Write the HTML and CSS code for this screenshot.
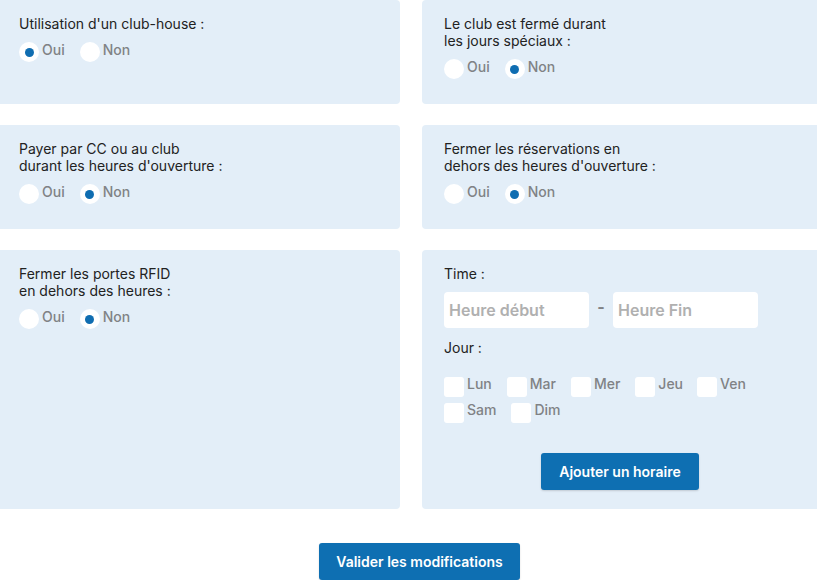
FILE: index.html
```html
<!DOCTYPE html>
<html lang="fr">
<head>
<meta charset="utf-8">
<link rel="stylesheet" href="styles.css">
</head>
<body>
<div class="page">
  <div class="grid">
    <div class="card">
      <div class="title">Utilisation d'un club-house :</div>
      <div class="radios">
        <label class="radio"><span class="dot checked"></span><span class="opt">Oui</span></label>
        <label class="radio"><span class="dot"></span><span class="opt">Non</span></label>
      </div>
    </div>
    <div class="card">
      <div class="title">Le club est fermé durant<br>les jours spéciaux :</div>
      <div class="radios">
        <label class="radio"><span class="dot"></span><span class="opt">Oui</span></label>
        <label class="radio"><span class="dot checked"></span><span class="opt">Non</span></label>
      </div>
    </div>
    <div class="card">
      <div class="title">Payer par CC ou au club<br>durant les heures d'ouverture :</div>
      <div class="radios">
        <label class="radio"><span class="dot"></span><span class="opt">Oui</span></label>
        <label class="radio"><span class="dot checked"></span><span class="opt">Non</span></label>
      </div>
    </div>
    <div class="card">
      <div class="title">Fermer les réservations en<br>dehors des heures d'ouverture :</div>
      <div class="radios">
        <label class="radio"><span class="dot"></span><span class="opt">Oui</span></label>
        <label class="radio"><span class="dot checked"></span><span class="opt">Non</span></label>
      </div>
    </div>
    <div class="card tall">
      <div class="title">Fermer les portes RFID<br>en dehors des heures :</div>
      <div class="radios">
        <label class="radio"><span class="dot"></span><span class="opt">Oui</span></label>
        <label class="radio"><span class="dot checked"></span><span class="opt">Non</span></label>
      </div>
    </div>
    <div class="card tall">
      <div class="title">Time :</div>
      <div class="times">
        <div class="input">Heure début</div>
        <span class="dash">-</span>
        <div class="input">Heure Fin</div>
      </div>
      <div class="title jour">Jour :</div>
      <div class="days">
        <label class="day"><span class="box"></span><span class="opt">Lun</span></label>
        <label class="day"><span class="box"></span><span class="opt">Mar</span></label>
        <label class="day"><span class="box"></span><span class="opt">Mer</span></label>
        <label class="day"><span class="box"></span><span class="opt">Jeu</span></label>
        <label class="day"><span class="box"></span><span class="opt">Ven</span></label>
        <label class="day"><span class="box"></span><span class="opt">Sam</span></label>
        <label class="day"><span class="box"></span><span class="opt">Dim</span></label>
      </div>
      <div class="btn-row">
        <button class="btn">Ajouter un horaire</button>
      </div>
    </div>
  </div>
  <div class="footer">
    <button class="btn">Valider les modifications</button>
  </div>
</div>
</body>
</html>
```

FILE: styles.css
```css
html, body {
  margin: 0;
  padding: 0;
  background: #ffffff;
  overflow: hidden;
}
body {
  font-family: Inter, "Liberation Sans", sans-serif;
  font-size: 14px;
  color: #222222;
}
.page {
  margin-left: -3px;
  width: 828px;
}
.grid {
  display: grid;
  grid-template-columns: 403px 403px;
  column-gap: 22px;
  row-gap: 21px;
}
.card {
  background: #e3eef8;
  border-radius: 4px;
  height: 104px;
  box-sizing: border-box;
  padding: 15px 22px 0 22px;
}
.card.tall {
  height: 259px;
}
.title {
  line-height: 17px;
  color: #222222;
}
.radios {
  display: flex;
  gap: 15px;
  margin-top: 10px;
}
.radio {
  display: flex;
  align-items: center;
  gap: 3px;
  height: 20px;
}
.dot {
  width: 20px;
  height: 20px;
  border-radius: 50%;
  background: #ffffff;
  display: flex;
  align-items: center;
  justify-content: center;
}
.dot.checked::after {
  content: "";
  width: 9px;
  height: 9px;
  border-radius: 50%;
  background: #0f6db1;
}
.opt {
  color: #808285;
  font-weight: 500;
  font-size: 14px;
  line-height: 17px;
  margin-top: -5px;
}
.times {
  display: flex;
  align-items: center;
  margin-top: 10px;
}
.input {
  width: 145px;
  height: 36px;
  background: #ffffff;
  border-radius: 4px;
  box-sizing: border-box;
  padding-left: 5px;
  display: flex;
  align-items: center;
  font-size: 16px;
  font-weight: 600;
  color: #b0b0b0;
}
.dash {
  width: 24px;
  text-align: center;
  color: #808285;
  font-weight: 700;
  font-size: 16px;
  margin-top: -6px;
}
.jour {
  margin-top: 11px;
}
.days {
  display: flex;
  flex-wrap: wrap;
  width: 330px;
  row-gap: 6px;
  margin-top: 21px;
}
.day {
  display: flex;
  align-items: center;
  gap: 3px;
  height: 20px;
  margin-right: 15px;
}
.day .opt {
  margin-top: -7px;
}
.day:nth-child(4) { margin-right: 14px; }
.day:nth-child(5) { margin-right: 0; }
.box {
  width: 20px;
  height: 20px;
  background: #ffffff;
  border-radius: 3px;
}
.btn-row {
  display: flex;
  justify-content: center;
  padding-right: 7px;
  margin-top: 30px;
}
.btn {
  background: #0e6fb2;
  color: #ffffff;
  border: none;
  border-radius: 3px;
  font-family: Inter, "Liberation Sans", sans-serif;
  font-weight: 600;
  font-size: 14px;
  height: 37px;
  padding: 0 18px;
  box-shadow: 0 1px 2px rgba(0,0,0,0.15);
}
.footer {
  display: flex;
  justify-content: center;
  padding-left: 17px;
  margin-top: 34px;
}
.footer .btn {
  padding: 0 17px;
}
```
